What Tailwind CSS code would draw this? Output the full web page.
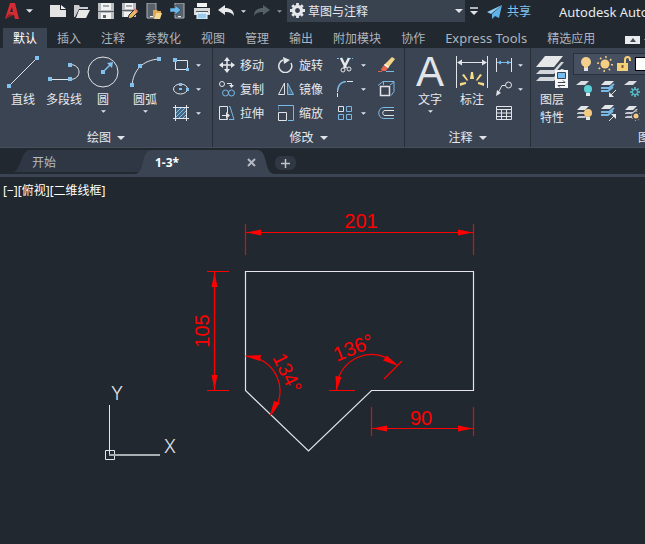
<!DOCTYPE html>
<html lang="zh-CN">

<head>
    <meta charset="UTF-8">
    <meta name="viewport" content="width=device-width, initial-scale=1.0">
    <title>Autodesk AutoCAD</title>
    <script src="https://cdn.jsdelivr.net/npm/@tailwindcss/browser@4"></script>
</head>

<body class="flex min-h-screen flex-col overflow-hidden bg-[#212830] font-['Noto_Sans','Noto_Sans_CJK_SC',sans-serif] text-xs text-[#e6e9ee]">

    <!-- Shared shapes -->
    <svg class="hidden">
        <symbol id="caret" viewBox="0 0 8 4"><path d="M0 0h8L4 4z" fill="#dfe3e8" /></symbol>
        <symbol id="sheets" viewBox="0 0 16 16">
            <path d="M5 1h8l-4 4H1z" fill="#e3e5e8" />
            <path d="M1 8l2-1h6l3-3h2l-5 5H1zM1 12l2-1h6l3-3h2l-5 5H1z" fill="#c6cad0" />
        </symbol>
    </svg>

    <!-- Title bar -->
    <header class="flex h-7 shrink-0 items-start overflow-hidden whitespace-nowrap">
        <button class="flex h-[22px] w-[46px] shrink-0 items-center gap-[7px] pl-[5px]" aria-label="应用程序菜单">
            <svg width="14" height="16" viewBox="0 0 14 16">
                <path d="M5 0h5l4 16h-4l-1-4H5l-1 2-4 2z" fill="#d52b33" />
                <path d="M7 4l1 5H5z" fill="#212830" />
                <path d="M0 16l4-5 5 1-5 2z" fill="#94202a" />
            </svg>
            <svg width="7" height="4" preserveAspectRatio="none"><use href="#caret" /></svg>
        </button>
        <button class="flex h-[22px] w-6 shrink-0 items-center justify-center" aria-label="新建">
            <svg width="16" height="16"><path d="M0 2h10v5h6v7H0z" fill="#e2e3e2" /><path d="M11 2l5 4h-5z" fill="#f4f4f4" /></svg>
        </button>
        <button class="flex h-[22px] w-6 shrink-0 items-center justify-center" aria-label="打开">
            <svg width="16" height="16"><path d="M0 2h5l1 2h8v2H5L1 14H0z" fill="#c9cbcc" /><path d="M5 7h11l-4 8H2z" fill="#e8e8e6" /></svg>
        </button>
        <button class="flex h-[22px] w-6 shrink-0 items-center justify-center" aria-label="保存">
            <svg width="16" height="16"><path d="M0 0h16v16H0z" fill="#b9bcc0" /><path d="M3 0h10v7H3zM3 10h10v6H3z" fill="#f2f2f2" /><path d="M5 3h6M0 8.500h16" stroke="#59606a" /><path d="M5 12h3v3H5z" fill="#59606a" /></svg>
        </button>
        <button class="flex h-[22px] w-6 shrink-0 items-center justify-center" aria-label="另存为">
            <svg width="16" height="16"><path d="M0 0h14v14H0z" fill="#b9bcc0" /><path d="M3 0h8v6H3zM2 9h8v5H2z" fill="#f2f2f2" /><path d="M4 3h6M0 7.500h14" stroke="#59606a" /><path d="M6 16l1-4 6-6 3 3-6 6z" fill="#e9b65f" stroke="#212830" /><path d="M12 7l1-2 3 3-1 2z" fill="#e98a77" /></svg>
        </button>
        <button class="flex h-[22px] w-6 shrink-0 items-center justify-center" aria-label="从 Web 打开">
            <svg width="16" height="16"><path d="M1 0h9v15H1z" fill="#59616b" stroke="#aeb3b8" /><path d="M4 13.500h3" stroke="#eee" /><path d="M7 7h4l1 1h3v2h-5l-2 5H7z" fill="#dfa84c" /><path d="M10 10h6l-2 6H8z" fill="#f6d794" /></svg>
        </button>
        <button class="flex h-[22px] w-6 shrink-0 items-center justify-center" aria-label="保存到 Web">
            <svg width="16" height="16"><path d="M5 0h9v15H5z" fill="#59616b" stroke="#aeb3b8" /><path d="M8 13.500h3" stroke="#eee" /><path d="M0 5h5V2l6 5-6 5V9H0z" fill="#68b9ee" stroke="#212830" stroke-width=".5" /></svg>
        </button>
        <button class="flex h-[22px] w-6 shrink-0 items-center justify-center" aria-label="打印">
            <svg width="16" height="16"><path d="M3 0h10v4H3z" fill="#f2f2f2" /><path d="M0 5h16v7H0z" fill="#d8dadc" /><path d="M2 8.500h12" stroke="#4d555f" /><path d="M3 10h10v6H3z" fill="#98cbed" stroke="#fff" /></svg>
        </button>
        <button class="flex h-[22px] w-6 shrink-0 items-center justify-center" aria-label="放弃">
            <svg width="16" height="12"><path d="M0 5l7-5v3c5 0 9 2 9 8-2-3-4-4-9-4v3z" fill="#e7e9eb" /></svg>
        </button>
        <button class="flex h-[22px] w-3 shrink-0 items-center" aria-label="放弃列表">
            <svg class="ml-[3px]" width="5" height="3"><use href="#caret" /></svg>
        </button>
        <button class="flex h-[22px] w-6 shrink-0 items-center justify-center" aria-label="重做">
            <svg width="16" height="12"><path d="M16 5L9 0v3C4 3 0 5 0 11c2-3 4-4 9-4v3z" fill="#566069" /></svg>
        </button>
        <button class="flex h-[22px] w-[13px] shrink-0 items-center" aria-label="重做列表">
            <svg class="ml-[3px] opacity-60" width="5" height="3"><use href="#caret" /></svg>
        </button>
        <div class="relative w-[178px] shrink-0">
            <select class="h-[22px] w-full appearance-none bg-[#39424f] pt-0.5 pl-[21px] text-xs" aria-label="工作空间">
                <option>草图与注释</option>
                <option>三维基础</option>
                <option>三维建模</option>
            </select>
            <svg class="pointer-events-none absolute top-[3px] left-[3px]" width="15" height="15" viewBox="-8 -8 16 16">
                <circle r="4.300" fill="none" stroke="#e5e7ea" stroke-width="3.500" />
                <path d="M0-8v3M0 5v3M-8 0h3M5 0h3M-5.600-5.600l2 2M3.600 3.600l2 2M-5.600 5.600l2-2M3.600-3.600l2-2" stroke="#e5e7ea" stroke-width="3" />
            </svg>
            <svg class="pointer-events-none absolute top-[9px] right-[2px]" width="8" height="4"><use href="#caret" /></svg>
        </div>
        <button class="flex h-[22px] w-[22px] shrink-0 items-center pl-[5px]" aria-label="自定义快速访问工具栏">
            <svg width="8" height="8"><path d="M0 1h8" stroke="#dfe3e8" stroke-width="1.500" /><path d="M0 4h8L4 8z" fill="#dfe3e8" /></svg>
        </button>
        <button class="flex h-6 w-[72px] shrink-0 items-center gap-[5px] text-[#80c4ee]">
            <svg width="15" height="14"><path d="M15 0L0 7l4 2z" fill="#8ecbf0" /><path d="M15 0L5 9v5l3-3 4 2z" fill="#5fb2e8" /></svg>
            共享
        </button>
        <h1 class="min-w-0 overflow-hidden text-[13px] leading-6">Autodesk AutoCAD 2021</h1>
    </header>

    <!-- Ribbon tabs -->
    <nav class="flex h-5 shrink-0 overflow-hidden whitespace-nowrap pl-[3px] text-[#aeb5bf]">
        <button class="bg-[#3b4453] px-2.5 pt-0.5 text-white">默认</button>
        <button class="px-2.5 pt-0.5">插入</button>
        <button class="px-2.5 pt-0.5">注释</button>
        <button class="px-2.5 pt-0.5">参数化</button>
        <button class="px-2.5 pt-0.5">视图</button>
        <button class="px-2.5 pt-0.5">管理</button>
        <button class="px-2.5 pt-0.5">输出</button>
        <button class="px-2.5 pt-0.5">附加模块</button>
        <button class="px-2.5 pt-0.5">协作</button>
        <button class="px-2.5 pt-0.5 text-[13px]">Express Tools</button>
        <button class="px-2.5 pt-0.5">精选应用</button>
        <button class="ml-5 flex items-center gap-1 pt-1" aria-label="最小化功能区">
            <svg width="15" height="8"><path d="M0 0h15v8H0z" fill="#e9ebed" /><path d="M5 6h6L8 2z" fill="#444c58" /></svg>
            <svg width="5" height="3"><use href="#caret" /></svg>
        </button>
    </nav>

    <!-- Ribbon -->
    <div class="flex shrink-0 overflow-hidden whitespace-nowrap border-b border-[#454e5c] bg-[#3b4453]">

        <section class="w-[213px] shrink-0 border-r border-[#272e38]">
            <div class="flex h-[79px] pl-0.5">
                <button class="flex w-[42px] flex-col items-center pt-2">
                    <svg width="32" height="32"><path d="M2 30L30 2" stroke="#e1e4e8" /><path d="M0 28h4v4H0zM28 0h4v4h-4z" fill="#80c1ee" /></svg>
                    <span class="leading-6">直线</span>
                </button>
                <button class="flex w-10 flex-col items-center pt-2">
                    <svg width="32" height="32"><path d="M2 23.500h20c12 0 12-15 0-15" fill="none" stroke="#e1e4e8" /><path d="M0 21h4v4H0zM20 21h4v4h-4zM20 7h4v4h-4z" fill="#80c1ee" /></svg>
                    <span class="leading-6">多段线</span>
                </button>
                <button class="flex w-[38px] flex-col items-center pt-2">
                    <svg width="32" height="32"><circle cx="16" cy="16" r="15" fill="none" stroke="#e1e4e8" /><path d="M16 16l7-7" stroke="#80c1ee" stroke-width="1.500" /><path d="M14 14h4v4h-4zM26 6l-1 6-5-5z" fill="#80c1ee" /></svg>
                    <span class="leading-6">圆</span>
                    <svg class="-mt-0.5" width="5" height="3"><use href="#caret" /></svg>
                </button>
                <button class="flex w-[46px] flex-col items-center pt-2">
                    <svg width="32" height="32"><path d="M3 30C4 14 14 4 30 3" fill="none" stroke="#e1e4e8" /><path d="M1 27h4v4H1zM9 8h4v4H9zM28 1h4v4h-4z" fill="#80c1ee" /></svg>
                    <span class="leading-6">圆弧</span>
                    <svg class="-mt-0.5" width="5" height="3"><use href="#caret" /></svg>
                </button>
                <div class="pt-[5px] pl-[5px]">
                    <button class="flex h-6 items-center gap-[7px]" aria-label="矩形">
                        <svg width="16" height="16"><path d="M2.500 3.500h12v9h-12z" fill="none" stroke="#e1e4e8" /><path d="M0 1h4v4H0zM13 11h3v3h-3z" fill="#80c1ee" /></svg>
                        <svg width="5" height="3"><use href="#caret" /></svg>
                    </button>
                    <button class="flex h-6 items-center gap-[7px]" aria-label="椭圆">
                        <svg width="16" height="16"><ellipse cx="7.500" cy="8" rx="7" ry="5" fill="none" stroke="#e1e4e8" /><path d="M6 2h3v3H6zM6 7h3v2H6zM13 7h3v3h-3z" fill="#80c1ee" /></svg>
                        <svg width="5" height="3"><use href="#caret" /></svg>
                    </button>
                    <button class="flex h-6 items-center gap-[7px]" aria-label="图案填充">
                        <svg width="16" height="16"><path d="M3 3h10v10H3z" fill="#45657f" /><path d="M3 8l5-5M3 12l9-9M6 13l7-7M10 13l3-3" stroke="#80c1ee" /><path d="M0 2.500h16M0 13.500h16M2.500 0v16M13.500 0v16" stroke="#e1e4e8" /></svg>
                        <svg width="5" height="3"><use href="#caret" /></svg>
                    </button>
                </div>
            </div>
            <button class="flex h-5 w-full items-center justify-center gap-1.5 pt-0.5">绘图 <svg width="8" height="4"><use href="#caret" /></svg></button>
        </section>

        <section class="w-[192px] shrink-0 border-r border-[#272e38]">
            <div class="flex h-[79px] pt-[5px] pl-1.5">
                <div class="w-[59px]">
                    <button class="flex h-6 items-center gap-[5px]">
                        <svg width="16" height="16"><path d="M8 2v12M2 8h12" stroke="#e6e9ec" stroke-width="1.500" /><path d="M8 0l3 4H5zM8 16l3-4H5zM0 8l4-3v6zM16 8l-4-3v6z" fill="#e6e9ec" /></svg>
                        <span class="pt-0.5">移动</span>
                    </button>
                    <button class="flex h-6 items-center gap-[5px]">
                        <svg width="16" height="16" fill="none"><circle cx="3" cy="3" r="2.500" stroke="#e1e4e8" /><path d="M8 2.500h4.500V5" stroke="#e1e4e8" /><path d="M10 4h5l-2.500 3z" fill="#e1e4e8" /><circle cx="6.500" cy="12" r="3" stroke="#7ab9e6" /><circle cx="12.500" cy="12" r="3" stroke="#7ab9e6" /></svg>
                        <span class="pt-0.5">复制</span>
                    </button>
                    <button class="flex h-6 items-center gap-[5px]">
                        <svg width="16" height="16" fill="none"><path d="M8.500 8V1.500h-8v13h8V13" stroke="#e1e4e8" /><path d="M3 10.500h4" stroke="#e1e4e8" /><path d="M7 7l4 3.500L7 14z" fill="#e1e4e8" /><path d="M10 1.500h1l4 13h-5" stroke="#7ab9e6" /></svg>
                        <span class="pt-0.5">拉伸</span>
                    </button>
                </div>
                <div class="w-[59px]">
                    <button class="flex h-6 items-center gap-[5px]">
                        <svg width="16" height="16"><path d="M5 3a6.500 6.500 0 1 0 8 3" fill="none" stroke="#e1e4e8" stroke-width="1.500" /><path d="M5 0l7 3-6 4z" fill="#e1e4e8" /></svg>
                        <span class="pt-0.5">旋转</span>
                    </button>
                    <button class="flex h-6 items-center gap-[5px]">
                        <svg width="16" height="16" fill="none"><path d="M6.500 2v11.500h-6z" stroke="#e1e4e8" /><path d="M9.500 2v11.500h6z" stroke="#7ab9e6" fill="#486b84" /></svg>
                        <span class="pt-0.5">镜像</span>
                    </button>
                    <button class="flex h-6 items-center gap-[5px]">
                        <svg width="16" height="16" fill="none"><path d="M0 5.500V.500h15.500v15H10" stroke="#7ab9e6" /><path d="M.500 7.500h8v8h-8z" stroke="#e1e4e8" /></svg>
                        <span class="pt-0.5">缩放</span>
                    </button>
                </div>
                <div class="w-[41px]">
                    <button class="flex h-6 items-center gap-2" aria-label="修剪">
                        <svg width="16" height="16" fill="none"><path d="M0 1.500h4M12 1.500h4" stroke="#7ab9e6" stroke-dasharray="2 1" /><path d="M4 1l5 10M12 1L7 11" stroke="#e6e9ec" stroke-width="2.500" /><circle cx="6" cy="13" r="2" stroke="#e6e9ec" /><circle cx="12" cy="12" r="2" stroke="#e6e9ec" /></svg>
                        <svg width="5" height="3"><use href="#caret" /></svg>
                    </button>
                    <button class="flex h-6 items-center gap-2" aria-label="圆角">
                        <svg width="16" height="16" fill="none"><path d="M.500 16v-6" stroke="#e1e4e8" stroke-dasharray="4 1" /><path d="M.500 10C1 4 4 1 9 .500" stroke="#7ab9e6" stroke-width="1.500" /><path d="M10 .500h6" stroke="#e1e4e8" /></svg>
                        <svg width="5" height="3"><use href="#caret" /></svg>
                    </button>
                    <button class="flex h-6 items-center gap-2" aria-label="阵列">
                        <svg width="16" height="16" fill="none"><path d="M1.500 1.500h5v5h-5z" stroke="#e1e4e8" /><path d="M9.500 1.500h5v5h-5zM1.500 9.500h5v5h-5zM9.500 9.500h5v5h-5z" stroke="#7ab9e6" /></svg>
                        <svg width="5" height="3"><use href="#caret" /></svg>
                    </button>
                </div>
                <div>
                    <button class="flex h-6 items-center" aria-label="删除">
                        <svg width="17" height="16"><path d="M0 14.500h4" stroke="#e55b4c" /><path d="M8 14.500h8" stroke="#7ab9e6" /><path d="M14 0l3 2-7 9-4-3z" fill="#f3d48a" /><path d="M6 8l4 3-2 3H4l-1-2z" fill="#e9674f" /><path d="M7 7l4 3-1 1-4-3z" fill="#fff" /></svg>
                    </button>
                    <button class="flex h-6 items-center" aria-label="分解">
                        <svg width="17" height="16" fill="none"><path d="M2.500 5.500h9v9h-9z" stroke="#e1e4e8" stroke-width="1.500" /><path d="M0 4.500l5-4h11v10l-3 4M12 4l4-3M5.500 1v3" stroke="#7ab9e6" /></svg>
                    </button>
                    <button class="flex h-6 items-center" aria-label="偏移">
                        <svg width="17" height="16" fill="none"><path d="M16 2.500H6c-7 0-7 11 0 11h10" stroke="#7ab9e6" /><path d="M16 5.500H7c-3 0-3 5 0 5h9" stroke="#e1e4e8" /></svg>
                    </button>
                </div>
            </div>
            <button class="flex h-5 w-full items-center justify-center gap-1.5 pt-0.5">修改 <svg width="8" height="4"><use href="#caret" /></svg></button>
        </section>

        <section class="w-[126px] shrink-0 border-r border-[#272e38]">
            <div class="flex h-[79px] pl-1">
                <button class="flex w-[42px] flex-col items-center pt-2">
                    <span class="h-8 font-['Liberation_Sans',sans-serif] text-[42px] leading-8 text-[#e1e4e8]">A</span>
                    <span class="leading-6">文字</span>
                    <svg class="-mt-0.5" width="5" height="3"><use href="#caret" /></svg>
                </button>
                <button class="flex w-[42px] flex-col items-center pt-2">
                    <svg width="32" height="32"><path d="M.500 0v32M31.500 0v32M2 6.500h28" stroke="#e1e4e8" /><path d="M1 6.500l5-3v6zM31 6.500l-5-3v6z" fill="#e1e4e8" /><path d="M15 16h2l1 7h-4zM6 19l2-1 4 6-1 1zM26 19l-2-1-4 6 1 1zM4 27l6-1v2l-6 2zM28 27l-6-1v2l6 2z" fill="#f6dc87" /></svg>
                    <span class="leading-6">标注</span>
                </button>
                <div class="pt-[5px] pl-[3px]">
                    <button class="flex h-6 items-center gap-1.5" aria-label="线性标注">
                        <svg width="16" height="16"><path d="M.500 1v14M15.500 1v14" stroke="#e1e4e8" /><path d="M1 5.500h14" stroke="#7ab9e6" /><path d="M1 5.500l4-2v4zM15 5.500l-4-2v4z" fill="#7ab9e6" /></svg>
                        <svg width="5" height="3"><use href="#caret" /></svg>
                    </button>
                    <button class="flex h-6 items-center gap-1.5" aria-label="引线">
                        <svg width="16" height="16" fill="none"><circle cx="12.500" cy="4" r="3" stroke="#e1e4e8" /><path d="M9 4.500H6L2 12" stroke="#e1e4e8" /><path d="M0 15l1-6 4 3z" fill="#e1e4e8" /></svg>
                        <svg width="5" height="3"><use href="#caret" /></svg>
                    </button>
                    <button class="flex h-6 items-center" aria-label="表格">
                        <svg width="16" height="16" fill="none"><path d="M.500 1.500h15v13H.500zM0 4.500h16M0 8h16M0 11.500h16M5.500 5v10M10.500 5v10" stroke="#e1e4e8" /></svg>
                    </button>
                </div>
            </div>
            <button class="flex h-5 w-full items-center justify-center gap-1.5 pt-0.5">注释 <svg width="8" height="4"><use href="#caret" /></svg></button>
        </section>

        <section class="w-[252px] shrink-0">
            <div class="flex h-[79px]">
                <button class="flex w-[42px] shrink-0 flex-col items-center pt-2">
                    <svg width="32" height="32">
                        <path d="M9 0h18L18 11H0z" fill="#e5e7e9" />
                        <path d="M0 18l4-4h14l7-8h3L18 18zM0 25l4-4h14l7-8h3L18 25z" fill="#d3d6da" />
                        <path d="M19 14h13v18H19z" fill="#f5f5f5" />
                        <path d="M21.500 16.500h8v6h-8z" fill="#75bdf0" stroke="#3b4453" />
                        <path d="M22 26.500h7l-2-2M29 29.500h-7l2 2" fill="none" stroke="#3b4453" />
                    </svg>
                    <span class="pt-[3px] leading-[18px]">图层<br>特性</span>
                </button>
                <div class="grow pt-[5px]">
                    <button class="flex h-[22px] w-full items-center gap-[3px] border border-[#29313b] bg-[#465061] pl-1" aria-label="图层">
                        <svg width="16" height="16"><circle cx="8" cy="6" r="5" fill="#f5cf8d" /><path d="M6 10h4v2H6z" fill="#f5cf8d" /><path d="M6 12h4v3H6z" fill="#dfe3e8" /></svg>
                        <svg width="16" height="16"><circle cx="8" cy="8" r="4.500" fill="#f6ce84" /><circle cx="8" cy="8" r="7" fill="none" stroke="#f6ce84" stroke-width="2" stroke-dasharray="1.500 4" /></svg>
                        <svg width="16" height="16"><path d="M1 7h11v8H1z" fill="#f4d176" /><path d="M9 7V4c0-4 5-4 5 0v1" fill="none" stroke="#f4d176" stroke-width="2" /><path d="M6.500 9v3" stroke="#7d5a38" stroke-width="2" /></svg>
                        <span class="h-3.5 w-4 border border-black bg-white"></span>
                    </button>
                    <div class="grid grid-cols-[24px_24px_24px] pt-0.5 pl-[3px]">
                        <button class="h-6" aria-label="关闭图层"><svg width="16" height="16"><path d="M5 0h8L9 4H0z" fill="#d9dce0" /><circle cx="12" cy="8" r="4" fill="#5bd1d5" /><path d="M10 12h4v3h-4z" fill="#e4e7ea" /></svg></button>
                        <button class="h-6" aria-label="隔离图层"><svg width="16" height="16"><path d="M5 0h9l-4 4H1z" fill="#e3e5e8" /><path d="M1 7h8l5-4M1 10h7l5-4" fill="none" stroke="#78b8e5" stroke-width="2" /><path d="M16 9l-5 5" stroke="#e4e7ea" /><path d="M9 16v-5l5 5z" fill="#e4e7ea" /></svg></button>
                        <button class="h-6" aria-label="冻结图层"><svg width="16" height="16"><path d="M5 0h8L9 4H0z" fill="#d9dce0" /><path d="M11 6v10M6 11h10M7.500 7.500l7 7M7.500 14.500l7-7" stroke="#5bcbd5" stroke-width="1.500" /><circle cx="11" cy="11" r="2.500" fill="#3b4453" stroke="#5bcbd5" /></svg></button>
                        <button class="h-6" aria-label="打开所有图层"><svg width="16" height="16"><use href="#sheets" /><circle cx="12" cy="8" r="4" fill="#f4ca83" /><path d="M10 12h4v3h-4z" fill="#e4e7ea" /></svg></button>
                        <button class="h-6" aria-label="取消隔离"><svg width="16" height="16"><path d="M5 0h9l-4 4H1z" fill="#e3e5e8" /><path d="M1 7h8l5-4M1 10h7l5-4" fill="none" stroke="#78b8e5" stroke-width="2" /><path d="M9 16l5-5" stroke="#e4e7ea" /><path d="M16 9v5l-5-5z" fill="#e4e7ea" /></svg></button>
                        <button class="h-6" aria-label="解冻所有图层"><svg width="16" height="16"><use href="#sheets" /><circle cx="12" cy="11" r="4" fill="#3b4453" /><circle cx="12" cy="11" r="2.500" fill="#f4ca83" /><circle cx="12" cy="11" r="4.500" fill="none" stroke="#f4ca83" stroke-dasharray="1 2.500" /></svg></button>
                    </div>
                </div>
            </div>
            <button class="flex h-5 w-full items-center justify-center gap-1.5 pt-0.5">图层 <svg width="8" height="4"><use href="#caret" /></svg></button>
        </section>
    </div>

    <!-- Drawing tabs -->
    <div class="flex h-[29px] shrink-0 items-end border-b-3 border-[#3b4453] pl-3">
        <button class="relative h-6 w-[138px] pt-0.5 pl-5 text-left text-[#b4bac3]">
            <svg class="absolute inset-0 h-full w-full" viewBox="0 0 138 24" preserveAspectRatio="none"><path d="M0 22c10 0 8-22 18-22h120v22z" fill="#2f3744" /></svg>
            <span class="relative">开始</span>
        </button>
        <div class="relative -ml-4 flex h-6 w-[141px] items-center justify-between pr-[19px] pl-[21px]">
            <svg class="absolute inset-0 h-full w-full" viewBox="0 0 141 24" preserveAspectRatio="none"><path d="M0 24c12 0 6-24 18-24h105c12 0 6 24 18 24z" fill="#3b4453" /></svg>
            <button class="relative pt-0.5 font-bold text-white">1-3*</button>
            <button class="relative" aria-label="关闭"><svg width="9" height="9"><path d="M1 1l7 7M8 1L1 8" stroke="#b3bac4" stroke-width="2" /></svg></button>
        </div>
        <button class="mb-1 flex h-3.5 w-[21px] items-center justify-center rounded-md bg-[#303844]" aria-label="新图形">
            <svg width="9" height="9"><path d="M4.500 0v9M0 4.500h9" stroke="#c0c5cc" stroke-width="1.500" /></svg>
        </button>
    </div>

    <!-- Model space -->
    <main class="relative grow">
        <p class="pt-1 pl-[3px] leading-5 text-white">[−][俯视][二维线框]</p>
        <svg class="absolute inset-0 h-full w-full font-['Liberation_Sans',sans-serif]" fill="none">
            <g transform="translate(0 -177)">
                <path d="M245.500 271.500h228v119h-102L308.500 451l-63-60.500z" stroke="#e4e4ea" stroke-width="1.200" />

                <g stroke="#f00" stroke-width="1.200">
                    <path d="M245.500 224v31M473.500 224v31M246 232.500h227" />
                    <path d="M207 271.500h22M207 390.500h22M214.500 272v118" />
                    <path d="M371.500 407v29M473.500 407v29M372 428.500h101" />
                    <path d="M245.500 356a35 35 0 0 1 25 59" />
                    <path d="M336.500 390a35 35 0 0 1 60-25" />
                    <path d="M329 390.500h26M384 379l18-18" />
                </g>
                <g fill="#f00">
                    <path d="M246 232.500l15-3v6zM473 232.500l-15-3v6z" />
                    <path d="M214.500 272l-3 15h6zM214.500 390l-3-15h6z" />
                    <path d="M372 428.500l15-3v6zM473 428.500l-15-3v6z" />
                    <path d="M245 356l16-1-1 6zM270 415l4-14 6 2z" />
                    <path d="M336.500 391l-1-15 6 1zM397 365.500l-14-5 4-5z" />
                </g>
                <g fill="#f00" font-size="20" text-anchor="middle">
                    <text x="361" y="228">201</text>
                    <text x="421" y="425">90</text>
                    <text transform="translate(209 331) rotate(-90)">105</text>
                    <text transform="translate(281 376) rotate(64)">134°</text>
                    <text transform="translate(356 354) rotate(-22)">136°</text>
                </g>

                <!-- UCS icon -->
                <path d="M109.500 405v50M105.500 450.500h9v9h-9z" stroke="#e4e4ea" />
                <path d="M109 455h51" stroke="#a9aeb2" stroke-width="2" />
                <g fill="#e4e4ea" font-size="18" text-anchor="middle" class="font-['Inter',sans-serif] font-light">
                    <text x="117" y="400">Y</text>
                    <text x="170" y="453">X</text>
                </g>
            </g>
        </svg>
    </main>

</body>

</html>
